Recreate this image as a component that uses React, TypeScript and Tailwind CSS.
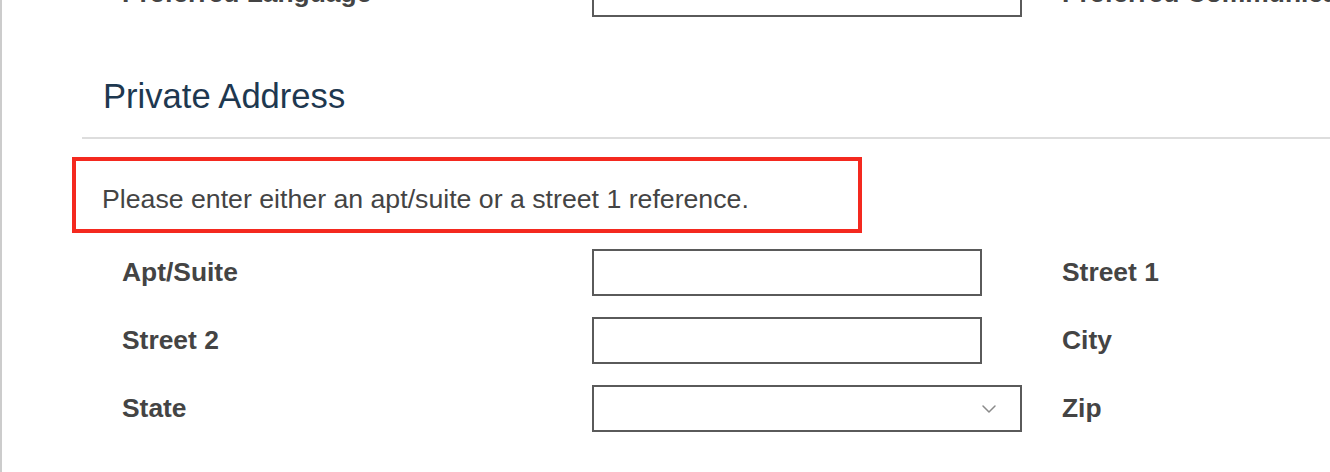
import { ChevronDown } from "lucide-react"

type Field = {
  left: string
  right: string
  kind: "text" | "select"
}

const rows: Field[] = [
  { left: "Apt/Suite", right: "Street 1", kind: "text" },
  { left: "Street 2", right: "City", kind: "text" },
  { left: "State", right: "Zip", kind: "select" },
]

function FieldRow({ left, right, kind }: Field) {
  return (
    <div className="flex items-center h-[47px] pl-[120px]">
      <label className="w-[470px] shrink-0 text-[26.4px] font-bold text-[#444] leading-none">{left}</label>
      <div className="w-[470px] shrink-0">
        {kind === "text" ? (
          <input className="block w-[390px] h-[47px] border-2 border-[#5a5a5a] bg-white outline-none" />
        ) : (
          <div className="flex items-center justify-end w-[430px] h-[47px] border-2 border-[#5a5a5a] bg-white pr-[19px]">
            <ChevronDown className="w-[24px] h-[24px] text-[#8a8a8a]" strokeWidth={1.5} />
          </div>
        )}
      </div>
      <label className="whitespace-nowrap text-[26.4px] font-bold text-[#444] leading-none">{right}</label>
    </div>
  )
}

export default function App() {
  return (
    <div className="h-[472px] w-[1330px] overflow-hidden bg-white border-l-2 border-[#cccccc] font-['Liberation_Sans',Arial,sans-serif]">
      <div className="-mt-[30px]">
        <FieldRow left="Preferred Language" right="Preferred Communication" kind="select" />
      </div>

      <h2 className="mt-[59px] ml-[101px] text-[34.6px] leading-[40px] font-normal text-[#1e3850]">Private Address</h2>

      <div className="mt-[21px] ml-[80px] h-[2px] bg-[#dddddd]" />

      <div className="mt-[18px] ml-[70px] w-[790px] h-[76px] border-4 border-[#f4291f] pl-[26px] pt-[22px]">
        <p className="text-[26.7px] leading-[32px] text-[#444]">Please enter either an apt/suite or a street 1 reference.</p>
      </div>

      <div className="mt-[16px] flex flex-col gap-[21px]">
        {rows.map(r => (
          <FieldRow key={r.left} {...r} />
        ))}
      </div>
    </div>
  )
}
